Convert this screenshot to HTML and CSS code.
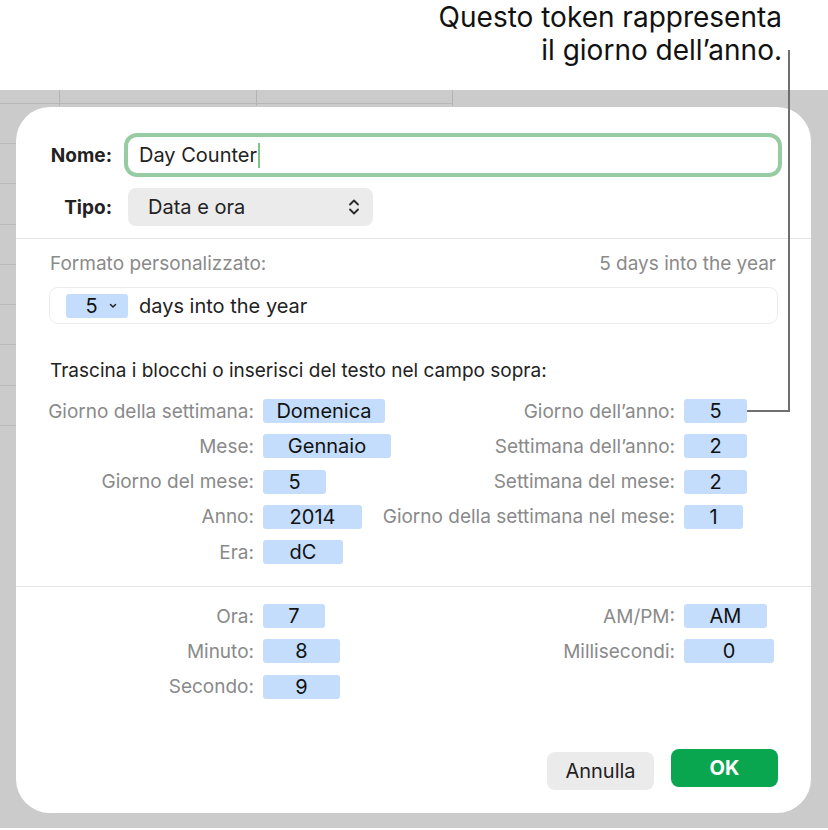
FILE: index.html
```html
<!DOCTYPE html>
<html lang="it">
<head>
<meta charset="utf-8">
<title>Day Counter</title>
<link rel="stylesheet" href="styles.css">
</head>
<body>
<div class="page">
  <div class="callout">
    <p>Questo token rappresenta<br>il giorno dell’anno.</p>
  </div>
  <div class="sheet">
    <div class="sheet-header"></div>
    <div class="dialog">
      <div class="row-name">
        <span class="lbl-b">Nome:</span>
        <div class="input"><span>Day Counter</span><span class="caret"></span></div>
      </div>
      <div class="row-type">
        <span class="lbl-b">Tipo:</span>
        <div class="popup">
          <span>Data e ora</span>
          <svg class="updown" width="12" height="18" viewBox="0 0 12 18"><path d="M2 6.5 L6 2.5 L10 6.5 M2 11.5 L6 15.5 L10 11.5" fill="none" stroke="#2a2a2a" stroke-width="1.8" stroke-linecap="round" stroke-linejoin="round"/></svg>
        </div>
      </div>
      <div class="sep sep-1"></div>
      <div class="fmt-head"><span>Formato personalizzato:</span><span>5 days into the year</span></div>
      <div class="tokenfield">
        <span class="tok tok-drop">5<svg width="8" height="6" viewBox="0 0 8 6"><path d="M1.5 1.5 L4 4 L6.5 1.5" fill="none" stroke="#222" stroke-width="1.5" stroke-linecap="round" stroke-linejoin="round"/></svg></span>
        <span class="tf-text">days into the year</span>
      </div>
      <p class="hint">Trascina i blocchi o inserisci del testo nel campo sopra:</p>
      <div class="fields">
        <span class="lbl">Giorno della settimana:</span><span class="tok w122">Domenica</span>
        <span class="lbl">Giorno dell’anno:</span><span class="tok w63">5</span>
        <span class="lbl">Mese:</span><span class="tok w128">Gennaio</span>
        <span class="lbl">Settimana dell’anno:</span><span class="tok w63">2</span>
        <span class="lbl">Giorno del mese:</span><span class="tok w63">5</span>
        <span class="lbl">Settimana del mese:</span><span class="tok w63">2</span>
        <span class="lbl">Anno:</span><span class="tok w99">2014</span>
        <span class="lbl">Giorno della settimana nel mese:</span><span class="tok w59">1</span>
        <span class="lbl">Era:</span><span class="tok w80">dC</span>
      </div>
      <div class="sep sep-2"></div>
      <div class="fields fields-time">
        <span class="lbl">Ora:</span><span class="tok w62">7</span>
        <span class="lbl">AM/PM:</span><span class="tok w83">AM</span>
        <span class="lbl">Minuto:</span><span class="tok w77">8</span>
        <span class="lbl">Millisecondi:</span><span class="tok w90">0</span>
        <span class="lbl">Secondo:</span><span class="tok w77">9</span>
      </div>
      <div class="actions">
        <button class="btn btn-cancel">Annulla</button>
        <button class="btn btn-ok">OK</button>
      </div>
    </div>
  </div>
  <div class="leader"></div>
</div>
</body>
</html>
```
FILE: styles.css
```css
* { box-sizing: border-box; }
html, body { margin: 0; padding: 0; background: #fff; }
body { width: 828px; height: 830px; overflow: hidden; font-family: "Inter", "Liberation Sans", sans-serif; }

.page { position: relative; width: 828px; height: 830px; }

.callout { height: 90px; padding: 1px 46px 0 0; text-align: right; }
.callout p {
  margin: 0;
  font-family: "Inter", "Liberation Sans", sans-serif;
  font-size: 28px; line-height: 33px; color: #111;
}

.sheet {
  height: 738px;
  padding: 0 17px 15px 16px;
  background-color: #cbcbcb;
  background-image: repeating-linear-gradient(to bottom, #b9b9b9 0 1px, transparent 1px 40.3px);
  background-size: 16px 290px;
  background-position: 0 53px;
  background-repeat: no-repeat;
}
.sheet-header {
  height: 17px;
  margin: 0 -17px 0 -16px;
  background-image:
    linear-gradient(#b7b7b7, #b7b7b7),
    linear-gradient(#b3b3b3, #b3b3b3),
    linear-gradient(#b3b3b3, #b3b3b3),
    linear-gradient(#b3b3b3, #b3b3b3);
  background-size: 452px 1px, 1px 16px, 1px 16px, 1px 16px;
  background-position: 0 13px, 59px 0, 256px 0, 452px 0;
  background-repeat: no-repeat;
}

.dialog {
  height: 706px;
  background: #fff;
  border-radius: 34px;
  padding: 30px 33px 23px 34px;
  display: flex;
  flex-direction: column;
}

.lbl-b { width: 62px; text-align: right; font-weight: 700; font-size: 19px; color: #222; flex: none; white-space: nowrap; }

.row-name { display: flex; align-items: center; gap: 16px; }
.input {
  flex: 1; height: 36px;
  border-radius: 9px;
  box-shadow: 0 0 0 4px #97cca2;
  display: flex; align-items: center;
  padding-left: 11px;
  font-size: 20px; color: #222;
}
.caret { width: 2px; height: 25px; background: #7fc38d; margin-left: 1px; }

.row-type { display: flex; align-items: center; gap: 16px; margin-top: 15px; }
.popup {
  width: 245px; height: 38px;
  background: #ebebeb; border-radius: 8px;
  display: flex; align-items: center; justify-content: space-between;
  padding: 0 13px 0 20px;
  font-size: 20px; color: #222;
}

.sep { height: 1px; background: #e4e4e4; margin-left: -34px; margin-right: -33px; flex: none; }
.sep-1 { margin-top: 12px; }

.fmt-head {
  margin-top: 13px; height: 22px;
  display: flex; justify-content: space-between; align-items: center;
  font-size: 19px; color: #8a8a8a;
  padding-right: 2px;
}

.tokenfield {
  margin: 13px 0 0 -1px; height: 37px;
  border: 1px solid #ececec; border-radius: 9px;
  display: flex; align-items: center; gap: 11px;
  padding-left: 16px;
  font-size: 20px; color: #222;
}

.tok {
  height: 24px; border-radius: 3px;
  background: #c4ddfc;
  display: inline-flex; align-items: center; justify-content: center;
  font-size: 20px; color: #111;
  white-space: nowrap;
}
.tok-drop { width: 62px; gap: 11px; padding-left: 8px; }

.hint { margin: 36px 0 0; height: 22px; line-height: 22px; font-size: 19px; color: #222; white-space: nowrap; }

.fields {
  margin-top: 17px;
  display: grid;
  grid-template-columns: 204px 108px 295px auto;
  column-gap: 9px;
  row-gap: 11.3px;
  align-items: center;
}
.fields-time { margin-top: 17px; }
.lbl { justify-self: end; font-size: 19px; color: #8a8a8a; white-space: nowrap; }
.fields .tok { justify-self: start; }
.sep-2 { margin-top: 22px; }

.w59 { width: 59px; } .w62 { width: 62px; } .w63 { width: 63px; }
.w77 { width: 77px; } .w80 { width: 80px; } .w83 { width: 83px; }
.w90 { width: 90px; } .w99 { width: 99px; } .w122 { width: 122px; }
.w128 { width: 128px; }

.actions { margin-top: auto; display: flex; justify-content: flex-end; align-items: flex-start; gap: 17px; }
.btn {
  width: 107px; height: 38px; border: 0; border-radius: 8px;
  font-family: inherit; font-size: 20px;
}
.btn-cancel { background: #ebebeb; color: #222; margin-top: 3px; }
.btn-ok { background: #0aa64f; color: #fff; font-weight: 700; }

.leader {
  position: absolute; left: 747px; top: 50px;
  width: 43px; height: 362px;
  border-right: 2px solid #6f6f6f; border-bottom: 2px solid #6f6f6f;
}
```
